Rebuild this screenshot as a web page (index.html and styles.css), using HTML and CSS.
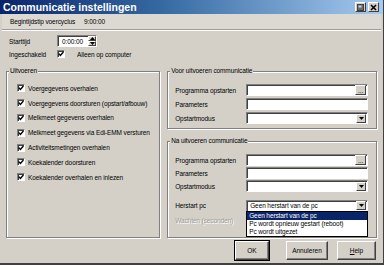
FILE: index.html
```html
<!DOCTYPE html>
<html lang="nl">
<head>
  <meta charset="UTF-8">
  <title>Communicatie instellingen</title>
  <link rel="stylesheet" href="styles.css">
</head>
<body>
  <div class="window">
    <div class="titlebar">
      <span class="title">Communicatie instellingen</span>
      <div class="tb-buttons">
        <span class="tb-btn">
          <svg width="7" height="7" viewBox="0 0 7 7"><rect x="0.5" y="0.5" width="6" height="6" fill="#6b6b6b" stroke="#404040"/><rect x="1.5" y="1.5" width="3" height="2" fill="#cfcfcf"/></svg>
        </span>
        <span class="tb-btn">
          <svg width="7" height="7" viewBox="0 0 7 7"><path d="M1 1 L6 6 M6 1 L1 6" stroke="#000" stroke-width="1.6"/></svg>
        </span>
      </div>
    </div>

    <div class="infobar">
      <span class="info-label">Begintijdstip voercyclus</span>
      <span>9:00:00</span>
    </div>

    <div class="form-top">
      <div class="row">
        <span class="row-label">Starttijd</span>
        <div class="field time-field">
          <span>0:00:00</span>
          <div class="spin">
            <span class="spin-btn"><svg width="5" height="3" viewBox="0 0 5 3"><path d="M0 3 L2.5 0 L5 3Z" fill="#000"/></svg></span>
            <span class="spin-btn"><svg width="5" height="3" viewBox="0 0 5 3"><path d="M0 0 L2.5 3 L5 0Z" fill="#000"/></svg></span>
          </div>
        </div>
      </div>
      <div class="row row-check">
        <span class="row-label">Ingeschakeld</span>
        <span class="check"><svg width="6" height="6" viewBox="0 0 6 6"><path d="M0.8 2.6 L2.4 4.4 L5.4 1" fill="none" stroke="#000" stroke-width="1.4"/></svg></span>
        <span class="check-text">Alleen op computer</span>
      </div>
    </div>

    <div class="main">
      <fieldset class="group group-left">
        <legend>Uitvoeren</legend>
        <ul class="checklist">
          <li><span class="check"><svg width="6" height="6" viewBox="0 0 6 6"><path d="M0.8 2.6 L2.4 4.4 L5.4 1" fill="none" stroke="#000" stroke-width="1.4"/></svg></span>Voergegevens overhalen</li>
          <li><span class="check"><svg width="6" height="6" viewBox="0 0 6 6"><path d="M0.8 2.6 L2.4 4.4 L5.4 1" fill="none" stroke="#000" stroke-width="1.4"/></svg></span>Voergegevens doorsturen (opstart/afbouw)</li>
          <li><span class="check"><svg width="6" height="6" viewBox="0 0 6 6"><path d="M0.8 2.6 L2.4 4.4 L5.4 1" fill="none" stroke="#000" stroke-width="1.4"/></svg></span>Melkmeet gegevens overhalen</li>
          <li><span class="check"><svg width="6" height="6" viewBox="0 0 6 6"><path d="M0.8 2.6 L2.4 4.4 L5.4 1" fill="none" stroke="#000" stroke-width="1.4"/></svg></span>Melkmeet gegevens via Edi-EMM versturen</li>
          <li><span class="check"><svg width="6" height="6" viewBox="0 0 6 6"><path d="M0.8 2.6 L2.4 4.4 L5.4 1" fill="none" stroke="#000" stroke-width="1.4"/></svg></span>Activiteitsmetingen overhalen</li>
          <li><span class="check"><svg width="6" height="6" viewBox="0 0 6 6"><path d="M0.8 2.6 L2.4 4.4 L5.4 1" fill="none" stroke="#000" stroke-width="1.4"/></svg></span>Koekalender doorsturen</li>
          <li><span class="check"><svg width="6" height="6" viewBox="0 0 6 6"><path d="M0.8 2.6 L2.4 4.4 L5.4 1" fill="none" stroke="#000" stroke-width="1.4"/></svg></span>Koekalender overhalen en inlezen</li>
        </ul>
      </fieldset>

      <div class="right-col">
        <fieldset class="group group-voor">
          <legend>Voor uitvoeren communicatie</legend>
          <div class="form-grid">
            <span>Programma opstarten</span>
            <div class="field"><span class="dots-btn">...</span></div>
            <span>Parameters</span>
            <div class="field"></div>
            <span>Opstartmodus</span>
            <div class="field"><span class="drop-btn"><svg width="5" height="3" viewBox="0 0 5 3"><path d="M0 0 L2.5 3 L5 0Z" fill="#000"/></svg></span></div>
          </div>
        </fieldset>

        <fieldset class="group group-na">
          <legend>Na uitvoeren communicatie</legend>
          <div class="form-grid">
            <span>Programma opstarten</span>
            <div class="field"><span class="dots-btn">...</span></div>
            <span>Parameters</span>
            <div class="field"></div>
            <span>Opstartmodus</span>
            <div class="field"><span class="drop-btn"><svg width="5" height="3" viewBox="0 0 5 3"><path d="M0 0 L2.5 3 L5 0Z" fill="#000"/></svg></span></div>
          </div>
          <div class="form-grid form-grid-lower">
            <span>Herstart pc</span>
            <div class="field combo-open">
              <span class="combo-value">Geen herstart van de pc</span>
              <span class="drop-btn"><svg width="5" height="3" viewBox="0 0 5 3"><path d="M0 0 L2.5 3 L5 0Z" fill="#000"/></svg></span>
              <ul class="droplist">
                <li class="selected">Geen herstart van de pc</li>
                <li>Pc wordt opnieuw gestart (reboot)</li>
                <li>Pc wordt uitgezet</li>
              </ul>
            </div>
            <span class="disabled">Wachten (seconden)</span>
            <div class="field"></div>
          </div>
        </fieldset>
      </div>
    </div>

    <div class="footer">
      <button class="btn btn-default">OK</button>
      <button class="btn btn-cancel">Annuleren</button>
      <button class="btn btn-help"><u>H</u>elp</button>
    </div>
  </div>
</body>
</html>
```

FILE: styles.css
```css
* {
  margin: 0;
  padding: 0;
  box-sizing: border-box;
}

body {
  width: 384px;
  height: 265px;
  overflow: hidden;
  background: #d4d0c8;
  font-family: 'Liberation Sans', Arial, sans-serif;
  font-size: 6.5px;
  letter-spacing: -0.1px;
  color: #000;
}

.window {
  height: 265px;
  display: flex;
  flex-direction: column;
  border-right: 1px solid #404040;
  border-bottom: 2px solid #404040;
}

/* title bar */
.titlebar {
  height: 14px;
  flex-shrink: 0;
  display: flex;
  align-items: center;
  justify-content: space-between;
  padding: 0 4px 0 3px;
  background: linear-gradient(to right, #0a246a 0%, #3a6ea5 45%, #a6caf0 100%);
}

.title {
  color: #fff;
  font-weight: bold;
  font-size: 10.5px;
  letter-spacing: 0;
}

.tb-buttons {
  display: flex;
  gap: 2px;
}

.tb-btn {
  width: 11px;
  height: 10px;
  display: flex;
  align-items: center;
  justify-content: center;
  background: #d4d0c8;
  border: 1px solid;
  border-color: #fff #404040 #404040 #fff;
}

/* info strip */
.infobar {
  height: 16px;
  flex-shrink: 0;
  display: flex;
  align-items: center;
  margin: 0 2px;
  padding-left: 8px;
  background: #dcd9d2;
  border-bottom: 1px solid #a09d96;
  box-shadow: 0 1px 0 #fff;
}

.info-label {
  width: 74px;
}

/* start time / enabled */
.form-top {
  display: flex;
  flex-direction: column;
  gap: 2px;
  padding: 5px 0 0 9px;
}

.row {
  display: flex;
  align-items: center;
  height: 12px;
}

.row-check {
  height: 10px;
}

.row-label {
  width: 48px;
}

.field {
  position: relative;
  height: 12px;
  background: #fff;
  border: 1px solid;
  border-color: #808080 #fff #fff #808080;
  box-shadow: inset 1px 1px 0 #404040;
  display: flex;
  align-items: center;
  justify-content: flex-end;
}

.time-field {
  width: 40px;
  justify-content: space-between;
  padding-left: 4px;
}

.spin {
  display: flex;
  flex-direction: column;
  height: 100%;
  width: 8px;
}

.spin-btn {
  flex: 1;
  display: flex;
  align-items: center;
  justify-content: center;
  background: #d4d0c8;
  border: 1px solid;
  border-color: #fff #404040 #404040 #fff;
}

.check {
  width: 8px;
  height: 8px;
  flex-shrink: 0;
  display: inline-flex;
  align-items: center;
  justify-content: center;
  background: #fff;
  border: 1px solid;
  border-color: #808080 #fff #fff #808080;
  box-shadow: inset 1px 1px 0 #404040;
}

.check-text {
  margin-left: 12px;
}

/* group boxes */
.main {
  display: flex;
  gap: 7px;
  padding: 0 6px;
  margin-top: 8px;
  height: 172px;
}

.group {
  border: 1px solid #808080;
  box-shadow: inset 1px 1px 0 #fff, 1px 1px 0 #fff;
  min-width: 0;
}

.group legend {
  margin-left: 2px;
  padding: 0 1px;
  background: #d4d0c8;
  line-height: 8px;
}

.group-left {
  width: 155px;
  height: 171px;
}

.checklist {
  list-style: none;
  padding: 6px 0 0 10px;
}

.checklist li {
  height: 14.8px;
  display: flex;
  align-items: center;
}

.checklist .check {
  margin-right: 3px;
}

.right-col {
  width: 211px;
  display: flex;
  flex-direction: column;
  gap: 8px;
}

.group-voor {
  height: 62px;
}

.group-na {
  height: 101px;
}

.form-grid {
  display: grid;
  grid-template-columns: 71px 122px;
  grid-auto-rows: 12px;
  row-gap: 2px;
  align-items: center;
  padding: 9px 0 0 7px;
}

.group-na .form-grid {
  row-gap: 1px;
}

.group-na .form-grid-lower {
  padding-top: 7px;
  grid-auto-rows: 13px;
  row-gap: 2px;
}

.dots-btn {
  width: 11px;
  height: 10px;
  margin-right: 1px;
  display: flex;
  align-items: flex-end;
  justify-content: center;
  line-height: 6px;
  background: #d4d0c8;
  border: 1px solid;
  border-color: #fff #404040 #404040 #fff;
}

.drop-btn {
  width: 10px;
  height: 9px;
  margin-right: 1px;
  display: flex;
  align-items: center;
  justify-content: center;
  background: #d4d0c8;
  border: 1px solid;
  border-color: #fff #404040 #404040 #fff;
}

.combo-open {
  justify-content: space-between;
}

.combo-value {
  padding-left: 3px;
}

.droplist {
  position: absolute;
  top: 100%;
  left: -1px;
  right: -1px;
  list-style: none;
  background: #fff;
  border: 1px solid #000;
  z-index: 2;
}

.droplist li {
  height: 8px;
  line-height: 8px;
  padding-left: 2px;
}

.droplist .selected {
  background: #0a246a;
  color: #fff;
}

.disabled {
  color: #a09d96;
  text-shadow: 1px 1px 0 #fff;
}

/* dialog buttons */
.footer {
  display: flex;
  justify-content: flex-end;
  padding: 2px 7px 0 0;
}

.btn {
  width: 34px;
  height: 19px;
  font: inherit;
  color: #000;
  background: #d4d0c8;
  border: 1px solid;
  border-color: #fff #404040 #404040 #fff;
  box-shadow: inset -1px -1px 0 #808080;
}

.btn-default {
  outline: 1px solid #000;
}

.btn-cancel {
  width: 42px;
  margin-left: 17px;
}

.btn-help {
  width: 39px;
  margin-left: 9px;
}
```
